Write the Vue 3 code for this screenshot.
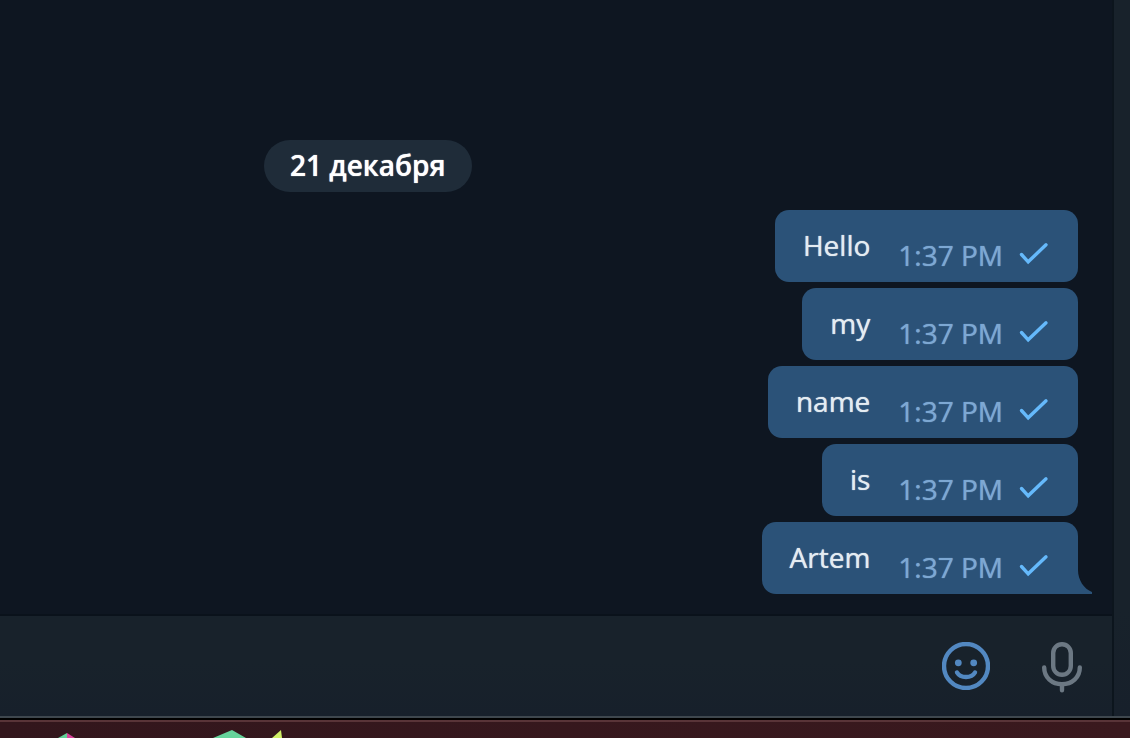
<script setup>
const messages = ['Hello', 'my', 'name', 'is', 'Artem']
</script>

<template>
  <div class="screen">
    <div class="window">
      <main class="chat">
        <section class="history">
          <time class="date">21 декабря</time>
          <ol class="messages">
            <li
              v-for="(text, i) in messages"
              :key="text"
              class="bubble"
              :class="{ last: i === messages.length - 1 }"
            >
              <span class="text">{{ text }}</span>
              <time class="time">1:37 PM</time>
              <svg class="check" viewBox="0 0 30 24" aria-hidden="true">
                <path d="M2.5 12.5 L9.2 19.8 L27 2.8" />
              </svg>
              <svg v-if="i === messages.length - 1" class="tail" viewBox="0 0 14 28" aria-hidden="true">
                <path d="M0 0 V28 H14 V26 C6 23 0 14 0 4 Z" />
              </svg>
            </li>
          </ol>
        </section>
        <footer class="composer">
          <button type="button" class="tool smile" aria-label="Emoji">
            <svg viewBox="0 0 48 48">
              <circle class="line" cx="24" cy="24" r="22" />
              <circle class="dot" cx="16.3" cy="20.8" r="3.4" />
              <circle class="dot" cx="31.7" cy="20.8" r="3.4" />
              <path class="line" d="M15 30.5 C18.5 36.5 29.5 36.5 33 30.5" />
            </svg>
          </button>
          <button type="button" class="tool mic" aria-label="Record voice message">
            <svg viewBox="0 0 48 52">
              <rect class="line" x="15.2" y="2.2" width="17.6" height="30.6" rx="8.8" />
              <path class="line" d="M6.2 25.5 C6.2 35.5 14 42.2 24 42.2 S41.8 35.5 41.8 25.5 M24 42.2 V48.2" />
            </svg>
          </button>
        </footer>
      </main>
      <aside class="side"></aside>
    </div>
    <div class="desktop">
      <svg class="shapes" viewBox="0 0 320 16" aria-hidden="true">
        <path fill="#62cf96" d="M58 16 L67 11 V16 Z" />
        <path fill="#d9439b" d="M67 11 L75 16 H67 Z" />
        <path fill="#66d39b" d="M213 16 L232 8 L246 16 Z" />
        <path fill="#d0f067" d="M272 16 L281 8 L282 16 Z" />
      </svg>
    </div>
  </div>
</template>

<style>
body {
  margin: 0;
  background: #0e1621;
}
</style>

<style scoped>
.screen {
  display: flex;
  flex-direction: column;
  min-height: 100vh;
  font-family: "Open Sans", "Noto Sans", sans-serif;
  font-size: 28px;
  line-height: 36px;
  text-shadow: 0 0 1px currentColor;
}
.window {
  flex: 1;
  display: flex;
  border-bottom: 2px solid #3e474e;
}
.chat {
  flex: 1;
  display: flex;
  flex-direction: column;
  background: #0e1621;
  border-right: 2px solid #0c151d;
}
.side {
  width: 16px;
  background: linear-gradient(#18222b 85%, #17202b);
}
.history {
  flex: 1;
  display: flex;
  flex-direction: column;
  justify-content: flex-end;
  padding: 0 34px 20px 0;
}
.date {
  align-self: flex-start;
  margin-left: 264px;
  padding: 7px 27px 9px 26px;
  border-radius: 26px;
  background: #1f2c39;
  color: #fff;
  font-weight: 600;
}
.messages {
  display: flex;
  flex-direction: column;
  align-items: flex-end;
  gap: 6px;
  margin: 18px 0 0;
  padding: 0;
  list-style: none;
}
.bubble {
  position: relative;
  display: flex;
  box-sizing: border-box;
  height: 72px;
  padding: 17px 29px 0 28px;
  border-radius: 14px;
  background: #2b5278;
}
.last {
  border-bottom-right-radius: 0;
}
.text {
  color: #e4ecf2;
}
.time {
  margin: 10px 16px 0 28px;
  color: #7da8d3;
}
.check {
  width: 30px;
  height: 24px;
  margin-top: 15px;
  fill: none;
  stroke: #65b9fb;
  stroke-width: 3.4;
  stroke-linecap: round;
}
.tail {
  position: absolute;
  left: 100%;
  bottom: 0;
  width: 14px;
  height: 28px;
  fill: #2b5278;
}
.composer {
  display: flex;
  justify-content: flex-end;
  align-items: flex-start;
  gap: 48px;
  padding: 26px 26px 22px;
  border-top: 2px solid #0a121b;
  background: linear-gradient(#18222b 45%, #17202b);
}
.tool {
  width: 48px;
  height: 52px;
  padding: 0;
  border: 0;
  background: none;
}
.tool svg {
  display: block;
  width: 100%;
}
.smile {
  height: 48px;
  color: #5288c1;
}
.mic {
  color: #6c7883;
}
.line {
  fill: none;
  stroke: currentColor;
  stroke-width: 4.4;
  stroke-linecap: round;
}
.dot {
  fill: currentColor;
}
.desktop {
  height: 16px;
  margin-top: 2px;
  border-top: 2px solid #593438;
  background: linear-gradient(90deg, #32161c, #3a191e);
  box-shadow: 0 -2px 0 #000;
}
.shapes {
  display: block;
  width: 320px;
  height: 16px;
}
</style>
